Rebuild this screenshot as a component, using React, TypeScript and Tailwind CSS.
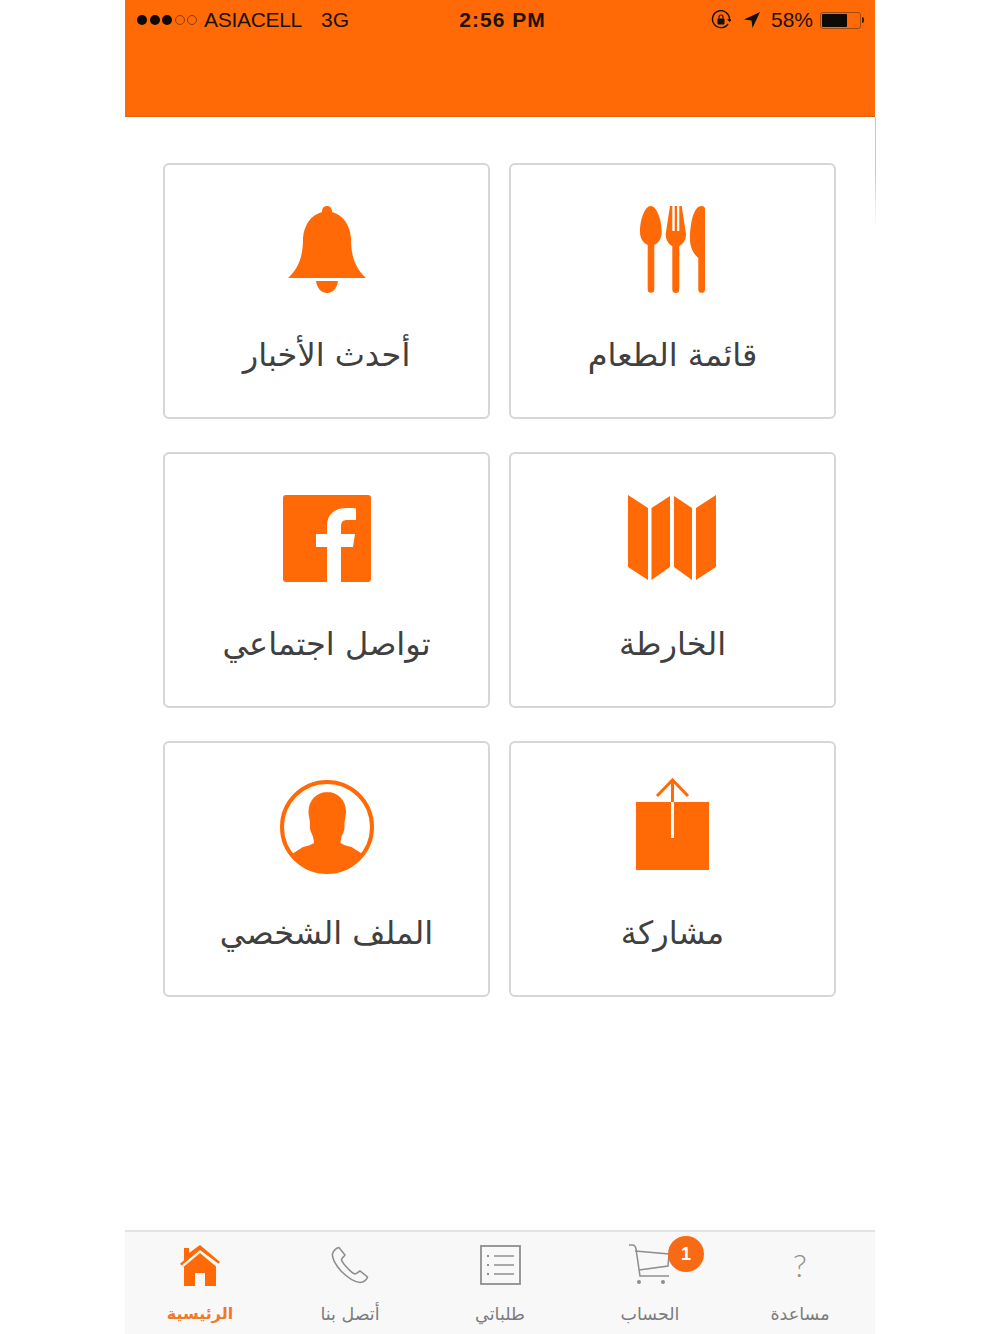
const ORANGE = "#ff6a07";

function BellIcon() {
  return (
    <svg width="78" height="87" viewBox="0 0 78 87" fill={ORANGE}>
      <path d="M39 0c3 0 5 2 5 6 11 3 18 13 19 26 0 14 2 28 15 40H0c13-12 15-26 15-40 1-13 8-23 19-26 0-4 2-6 5-6z" />
      <path d="M28 75h22c-1 7-5 12-11 12s-10-5-11-12z" />
    </svg>
  );
}

function CutleryIcon() {
  return (
    <svg width="66" height="87" viewBox="0 0 66 87" fill={ORANGE}>
      <path d="M10.700 0C5 0 0 13 0 26c0 6 3 11 7.700 13v44.500a3.300 3.300 0 0 0 6.600 0V39C19 37 21.700 32 21.700 26 21.700 13 16.500 0 10.700 0z" />
      <path d="M30 0h2.300v25h2.400V0H37v25h2.300V0h2.400L46 28c0 6-3 10-6.700 12v43.500a3.500 3.500 0 0 1-7 0V40c-3.700-2-6.600-6-6.600-12z" />
      <path d="M65 3v80.500a3.300 3.300 0 0 1-6.700 0V52C53 47 50 41 50 33 50 16 54 0 61.500 0 63.500 0 65 1 65 3z" />
    </svg>
  );
}

function FacebookIcon() {
  return (
    <svg width="88" height="87" viewBox="0 0 88 87">
      <rect width="88" height="87" rx="3" fill={ORANGE} />
      <path
        d="M58 87V52h12l2-13H58v-8c0-4 2-6 6-6h9V13.500c-2-.5-6-.5-10-.5-12 0-19 7-19 18v8H33v13h11v35z"
        fill="#fff"
      />
    </svg>
  );
}

function MapIcon() {
  return (
    <svg width="89" height="86" viewBox="0 0 89 86" fill={ORANGE}>
      <path d="M0 0 20 13V85L0 72z" />
      <path d="M23.500 13 42 1V72L23.500 85z" />
      <path d="M46 1 64 13V85L46 72z" />
      <path d="M68 13 88 0V72L68 85z" />
    </svg>
  );
}

function ProfileIcon() {
  return (
    <svg width="94" height="94" viewBox="0 0 94 94" fill={ORANGE}>
      <circle cx="47" cy="47" r="45" fill="none" stroke={ORANGE} strokeWidth="4" />
      <path d="M47 12c11 0 19 8 19 20 0 4-1.500 8-1.500 11 0 3 .5 6-1 9-1.500 3-3 7-3 11 3 2 7 3 11 4l11 7A45 45 0 0 1 12 74l11-7c4-1 8-2 11-4 0-4-1.500-8-3-11-1.500-3-1-6-1-9 0-3-1.500-7-1.500-11 0-12 8-20 19.500-20z" />
    </svg>
  );
}

function ShareIcon() {
  return (
    <svg width="73" height="92" viewBox="0 0 73 92" className="mb-[6px]">
      <rect y="24" width="73" height="68" fill={ORANGE} />
      <path d="M36.500 24V2M21 18 36.500 2 52 18" fill="none" stroke={ORANGE} strokeWidth="3" />
      <path d="M36.500 24V60" fill="none" stroke="#fff" strokeWidth="3" />
    </svg>
  );
}

function HomeIcon() {
  return (
    <svg width="40" height="41" viewBox="0 0 40 41" fill={ORANGE}>
      <path d="M4 3h5v5l11-8 20 17-1.500 1.800L20 5 1.500 20.500 0 18.700l4-3.400z" />
      <path d="M20 8 36 21.500V41H25V28H15V41H4V21.500z" />
    </svg>
  );
}

function PhoneIcon() {
  return (
    <svg width="38" height="38" viewBox="0 0 38 38" fill="none" stroke="#8e8e8e" strokeWidth="1.600">
      <path d="M8 1.500C5 2 2 5 1.500 8 1 12 4 18 10 25c7 7 14 11 19 11.500 4 0 7-3 7.500-5.500L29 25c-2 1-3 3-5 3-3-.5-12-10-13.500-14-.5-2 2.500-3 3.500-5z" />
    </svg>
  );
}

function ListIcon() {
  return (
    <svg width="41" height="40" viewBox="0 0 41 40" fill="none" stroke="#8e8e8e">
      <rect x="1" y="1" width="39" height="38" strokeWidth="1.800" />
      <path d="M14 11h20M14 20h20M14 29h20" strokeWidth="1.500" />
      <path d="M7 11h2M7 20h2M7 29h2" strokeWidth="2" />
    </svg>
  );
}

function CartIcon() {
  return (
    <svg width="42" height="42" viewBox="0 0 42 42" fill="none" stroke="#8e8e8e" strokeWidth="1.500">
      <path d="M0 1h3.500c2 0 3 1.500 3.500 4l4 27h29" />
      <path d="M6 7l34 3-1 12-29 4" />
      <circle cx="10" cy="38" r="2" fill="#8e8e8e" stroke="none" />
      <circle cx="34" cy="38" r="2" fill="#8e8e8e" stroke="none" />
    </svg>
  );
}

function RotationLockIcon() {
  return (
    <svg width="20" height="20" viewBox="0 0 20 20" fill="none" stroke="#111">
      <path d="M17 14A8.500 8.500 0 1 1 18.500 9.500" strokeWidth="1.400" />
      <path d="M16 9h5l-2.500 3z" fill="#111" stroke="none" />
      <rect x="6.500" y="8.500" width="7" height="6" rx="1" fill="#111" stroke="none" />
      <path d="M8 8.500V7a2 2 0 0 1 4 0v1.500" strokeWidth="1.200" />
    </svg>
  );
}

function BatteryIcon() {
  return (
    <div className="flex items-center">
      <div className="h-[17px] w-[41px] rounded-[3px] border border-[#a34a08] p-px">
        <div className="h-full w-[25px] rounded-[1px] bg-[#0d0a08]" />
      </div>
      <div className="ml-px h-[6px] w-[2px] rounded-r-sm bg-[#3a2208]" />
    </div>
  );
}

function StatusBar() {
  return (
    <div className="flex h-[40px] items-center justify-between pl-[12px] pr-[11px] font-['Liberation_Sans',sans-serif] text-[21px] text-[#1c1208]">
      <div className="flex w-[264px] items-center">
        <div className="flex items-center gap-[2.5px]">
          <span className="h-[10px] w-[10px] rounded-full bg-[#0d0a08]" />
          <span className="h-[10px] w-[10px] rounded-full bg-[#0d0a08]" />
          <span className="h-[10px] w-[10px] rounded-full bg-[#0d0a08]" />
          <span className="h-[10px] w-[10px] rounded-full border border-[#8a3f08]" />
          <span className="h-[10px] w-[10px] rounded-full border border-[#8a3f08]" />
        </div>
        <span className="ml-[7px] tracking-[-0.3px]">ASIACELL</span>
        <span className="ml-[19px]">3G</span>
      </div>
      <span className="font-semibold tracking-[1px]">2:56 PM</span>
      <div className="flex w-[260px] items-center justify-end">
        <RotationLockIcon />
        <svg width="16" height="16" viewBox="0 0 16 16" className="ml-[13px]" fill="#111">
          <path d="M16 0 0 7.500l7.500 1 1 7.500z" />
        </svg>
        <span className="ml-[11px]">58%</span>
        <div className="ml-[7px]">
          <BatteryIcon />
        </div>
      </div>
    </div>
  );
}

const MENU = [
  { label: "قائمة الطعام", icon: <CutleryIcon /> },
  { label: "أحدث الأخبار", icon: <BellIcon /> },
  { label: "الخارطة", icon: <MapIcon /> },
  { label: "تواصل اجتماعي", icon: <FacebookIcon /> },
  { label: "مشاركة", icon: <ShareIcon /> },
  { label: "الملف الشخصي", icon: <ProfileIcon /> },
];

const TABS = [
  { label: "الرئيسية", icon: <HomeIcon />, active: true },
  { label: "أتصل بنا", icon: <PhoneIcon /> },
  { label: "طلباتي", icon: <ListIcon /> },
  { label: "الحساب", icon: <CartIcon />, badge: "1" },
  {
    label: "مساعدة",
    icon: <span className="font-['Lato',sans-serif] text-[32px] font-light leading-none text-[#8e8e8e]">?</span>,
  },
];

export default function App() {
  return (
    <div className="min-h-[1334px] bg-white font-['DejaVu_Sans',sans-serif]">
      <div className="relative mx-auto flex h-[1334px] w-[750px] flex-col">
        <header className="h-[117px] shrink-0 border-b border-[#d9640f] bg-[#ff6a07]">
          <StatusBar />
        </header>

        {/* faint edge line left over in the screenshot */}
        <div className="absolute right-[-1px] top-[117px] h-[110px] w-px bg-gradient-to-b from-[#c8c8c8] via-[#c8c8c8] to-transparent" />

        <main dir="rtl" className="grid grid-cols-2 gap-x-[19px] gap-y-[33px] pl-[38px] pr-[39px] pt-[46px]">
          {MENU.map((item) => (
            <div
              key={item.label}
              className="flex h-[256px] flex-col items-center rounded-[6px] border-2 border-[#d6d6d6] bg-white"
            >
              <div className="mt-[26px] flex h-[116px] items-center justify-center">{item.icon}</div>
              <div className="mt-[23px] text-[32px] leading-[50px] text-[#404040]">{item.label}</div>
            </div>
          ))}
        </main>

        <nav className="mt-auto grid h-[104px] shrink-0 grid-cols-5 border-t-2 border-[#e3e3e3] bg-[#f8f8f8]">
          {TABS.map((tab) => (
            <div key={tab.label} className="flex flex-col items-center">
              <div className="relative mt-[12px] flex h-[42px] items-center justify-center">
                {tab.icon}
                {tab.badge && (
                  <span className="absolute left-[39px] top-[-8px] flex h-[36px] w-[36px] items-center justify-center rounded-full bg-[#f96a14] font-['Liberation_Sans',sans-serif] text-[18px] font-bold text-white">
                    {tab.badge}
                  </span>
                )}
              </div>
              <span
                dir="rtl"
                className={`mt-[16px] leading-[24px] ${tab.active ? "text-[16px] font-bold text-[#ee7a28]" : "text-[17.5px] text-[#7c7c7c]"}`}
              >
                {tab.label}
              </span>
            </div>
          ))}
        </nav>
      </div>
    </div>
  );
}
